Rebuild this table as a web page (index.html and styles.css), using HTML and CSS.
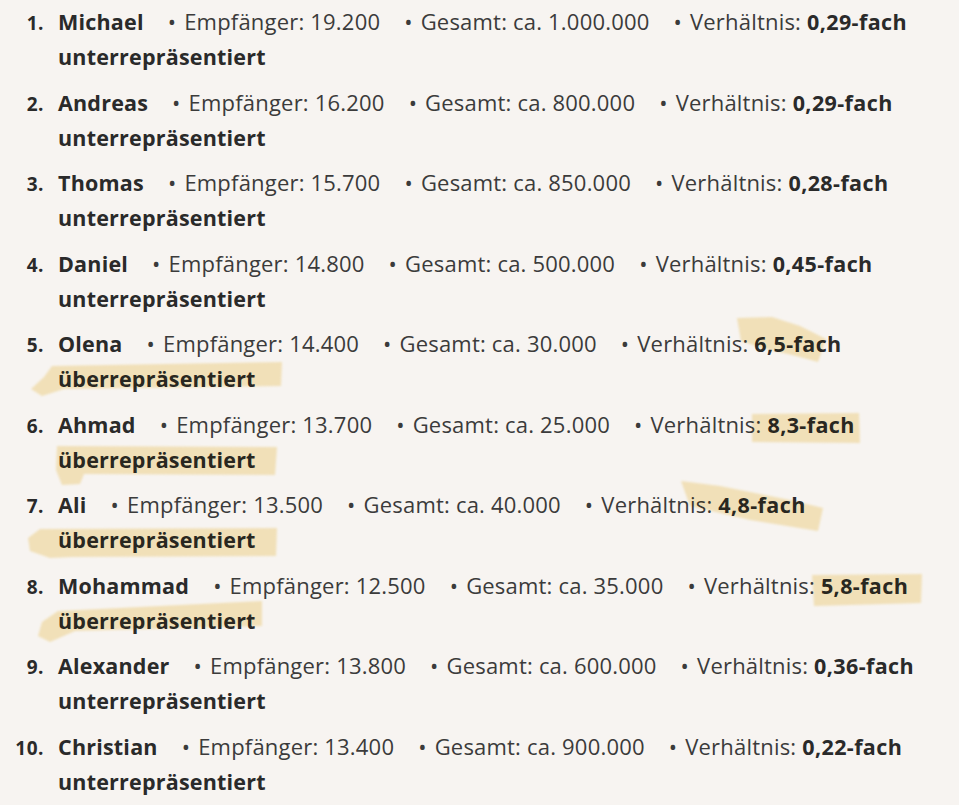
FILE: index.html
```html
<!DOCTYPE html>
<html lang="de">
<head>
<meta charset="utf-8">
<title>Vornamen</title>
<link rel="stylesheet" href="styles.css">
</head>
<body>
<ol class="list">
  <li class="item"><span class="num">1.</span><div class="body"><span class="name">Michael</span><span class="seg">Empfänger: 19.200</span><span class="seg">Gesamt: ca. 1.000.000</span><span class="seg">Verhältnis: <b>0,29-fach</b></span><b class="verdict">unterrepräsentiert</b></div></li>
  <li class="item"><span class="num">2.</span><div class="body"><span class="name">Andreas</span><span class="seg">Empfänger: 16.200</span><span class="seg">Gesamt: ca. 800.000</span><span class="seg">Verhältnis: <b>0,29-fach</b></span><b class="verdict">unterrepräsentiert</b></div></li>
  <li class="item"><span class="num">3.</span><div class="body"><span class="name">Thomas</span><span class="seg">Empfänger: 15.700</span><span class="seg">Gesamt: ca. 850.000</span><span class="seg">Verhältnis: <b>0,28-fach</b></span><b class="verdict">unterrepräsentiert</b></div></li>
  <li class="item"><span class="num">4.</span><div class="body"><span class="name">Daniel</span><span class="seg">Empfänger: 14.800</span><span class="seg">Gesamt: ca. 500.000</span><span class="seg">Verhältnis: <b>0,45-fach</b></span><b class="verdict">unterrepräsentiert</b></div></li>
  <li class="item"><span class="num">5.</span><div class="body"><span class="name">Olena</span><span class="seg">Empfänger: 14.400</span><span class="seg">Gesamt: ca. 30.000</span><span class="seg">Verhältnis: <b>6,5-fach</b></span><b class="verdict">überrepräsentiert</b></div></li>
  <li class="item"><span class="num">6.</span><div class="body"><span class="name">Ahmad</span><span class="seg">Empfänger: 13.700</span><span class="seg">Gesamt: ca. 25.000</span><span class="seg">Verhältnis: <b>8,3-fach</b></span><b class="verdict">überrepräsentiert</b></div></li>
  <li class="item"><span class="num">7.</span><div class="body"><span class="name">Ali</span><span class="seg">Empfänger: 13.500</span><span class="seg">Gesamt: ca. 40.000</span><span class="seg">Verhältnis: <b>4,8-fach</b></span><b class="verdict">überrepräsentiert</b></div></li>
  <li class="item"><span class="num">8.</span><div class="body"><span class="name">Mohammad</span><span class="seg">Empfänger: 12.500</span><span class="seg">Gesamt: ca. 35.000</span><span class="seg">Verhältnis: <b>5,8-fach</b></span><b class="verdict">überrepräsentiert</b></div></li>
  <li class="item"><span class="num">9.</span><div class="body"><span class="name">Alexander</span><span class="seg">Empfänger: 13.800</span><span class="seg">Gesamt: ca. 600.000</span><span class="seg">Verhältnis: <b>0,36-fach</b></span><b class="verdict">unterrepräsentiert</b></div></li>
  <li class="item"><span class="num">10.</span><div class="body"><span class="name">Christian</span><span class="seg">Empfänger: 13.400</span><span class="seg">Gesamt: ca. 900.000</span><span class="seg">Verhältnis: <b>0,22-fach</b></span><b class="verdict">unterrepräsentiert</b></div></li>
</ol>
<svg class="marks" viewBox="0 0 959 805" aria-hidden="true">
  <g class="mark">
    <path d="M52 366 L282 362 L281 386 L64 389 L42 396 L31 389 L44 377 Z"/>
    <path d="M737 318 L772 317 L800 326 L826 339 L818 362 L796 356 L762 348 L741 341 Z"/>
    <path d="M752 414 L859 413 L860 443 L752 442 Z"/>
    <path d="M57 446 L277 447 L275 475 L84 474 L80 484 L62 485 L56 470 Z"/>
    <path d="M681 481 L720 486 L790 500 L823 508 L818 531 L750 520 L690 506 Z"/>
    <path d="M40 529 L277 528 L276 556 L72 557 L50 558 L30 551 L28 538 Z"/>
    <path d="M812 575 L922 574 L921 603 L814 606 Z"/>
    <path d="M58 611 L262 601 L262 626 L75 631 L50 642 L38 636 L42 622 Z"/>
  </g>
</svg>
</body>
</html>
```

FILE: styles.css
```css
html, body {
  margin: 0;
  padding: 0;
  background: #f7f4f1;
}

body {
  position: relative;
  width: 959px;
  height: 805px;
  overflow: hidden;
  font-family: "Open Sans", "Noto Sans", sans-serif;
  font-size: 22px;
  letter-spacing: 0.2px;
  color: #3b3b3b;
}

.list {
  list-style: none;
  margin: 0;
  padding: 4px 0 0 0;
  display: flex;
  flex-direction: column;
  gap: 10.5px;
}

.item {
  display: flex;
  align-items: baseline;
  line-height: 35px;
}

.num {
  flex: 0 0 44px;
  text-align: right;
  font-weight: 700;
  font-size: 19px;
  letter-spacing: 0.5px;
  color: #2a2a2a;
  padding-right: 14px;
  box-sizing: content-box;
}

.body {
  flex: 1;
  white-space: nowrap;
}

.name {
  font-weight: 700;
  font-size: 21.5px;
  letter-spacing: 0.2px;
  color: #2a2a2a;
}

.seg {
  margin-left: 24px;
}

.seg::before {
  content: "•";
  margin-right: 8px;
}

b {
  font-weight: 700;
  font-size: 21.5px;
  letter-spacing: 0.4px;
  color: #2a2a2a;
}

.verdict {
  display: block;
  letter-spacing: 0.2px;
}

.marks {
  position: absolute;
  left: 0;
  top: 0;
  width: 959px;
  height: 805px;
  pointer-events: none;
  mix-blend-mode: multiply;
}

.mark {
  filter: blur(0.8px);
}

.mark path {
  fill: #f6df9e;
  opacity: 0.62;
}
```
